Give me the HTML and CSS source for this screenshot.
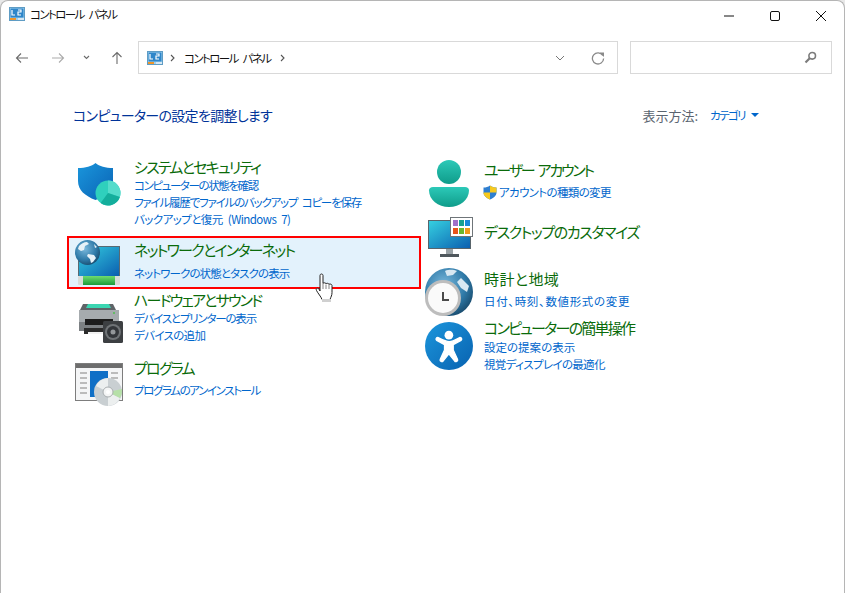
FILE: index.html
```html
<!DOCTYPE html>
<html lang="ja">
<head>
<meta charset="utf-8">
<title>コントロール パネル</title>
<link rel="stylesheet" href="styles.css">
</head>
<body>
<svg class="defs" width="0" height="0" aria-hidden="true">
  <defs>
    <symbol id="cp" viewBox="0 0 16 14">
      <rect x="0.5" y="0.5" width="15" height="13" fill="#9fd0ee" stroke="#5f9cc4"/>
      <rect x="1.5" y="1.5" width="13" height="9" fill="#2f86c9"/>
      <path d="M3 3v5h3M9 3h3v2h-3v3h3" fill="none" stroke="#fff" stroke-width="1.2"/>
      <rect x="1" y="11" width="6" height="2" fill="#f0962a"/>
      <rect x="9" y="11" width="6" height="2" fill="#d7e7f2"/>
    </symbol>
    <linearGradient id="gShield" x1="0" y1="0" x2="1" y2="1"><stop offset="0" stop-color="#1a96dc"/><stop offset="1" stop-color="#0a62b4"/></linearGradient>
    <linearGradient id="gTeal" x1="0" y1="0" x2="0" y2="1"><stop offset="0" stop-color="#2cc9b8"/><stop offset="1" stop-color="#0f9c8a"/></linearGradient>
    <linearGradient id="gScreen" x1="0" y1="0" x2="1" y2="1"><stop offset="0" stop-color="#35cfe0"/><stop offset="1" stop-color="#0b5fb0"/></linearGradient>
    <radialGradient id="gGlobe" cx="0.4" cy="0.35" r="0.75"><stop offset="0" stop-color="#7ab8dc"/><stop offset="0.6" stop-color="#2f7aa8"/><stop offset="1" stop-color="#14405f"/></radialGradient>
    <linearGradient id="gAcc" x1="0" y1="0" x2="1" y2="1"><stop offset="0" stop-color="#1c96dc"/><stop offset="1" stop-color="#0862b0"/></linearGradient>
    <linearGradient id="gPipe" x1="0" y1="0" x2="0" y2="1"><stop offset="0" stop-color="#6fdc6f"/><stop offset="1" stop-color="#1a9a3a"/></linearGradient>
  </defs>
</svg>
<div class="window">
  <header class="titlebar">
    <div class="title-group">
      <svg class="cp-icon" width="16" height="14"><use href="#cp"/></svg>
      <span class="title-text">コントロール パネル</span>
    </div>
    <div class="controls">
      <svg class="ctl" width="46" height="30" viewBox="0 0 46 30"><path d="M18 15h10" stroke="#111" stroke-width="1"/></svg>
      <svg class="ctl" width="46" height="30" viewBox="0 0 46 30"><rect x="18.500" y="10.500" width="9" height="9" rx="1.500" fill="none" stroke="#111"/></svg>
      <svg class="ctl" width="46" height="30" viewBox="0 0 46 30"><path d="M18 10l10 10M28 10l-10 10" stroke="#111" stroke-width="1"/></svg>
    </div>
  </header>
  <nav class="navbar">
    <div class="navbtns">
      <svg class="nav-ic" width="14" height="12" viewBox="0 0 14 12"><path d="M13 6H1.500M6 1.500L1.500 6 6 10.500" fill="none" stroke="#6b6b6b" stroke-width="1.100"/></svg>
      <svg class="nav-ic fwd" width="14" height="12" viewBox="0 0 14 12"><path d="M1 6h11.500M8 1.500L12.500 6 8 10.500" fill="none" stroke="#ababab" stroke-width="1.100"/></svg>
      <svg class="nav-ic down" width="7" height="5" viewBox="0 0 7 5"><path d="M1 1l2.500 2.500L6 1" fill="none" stroke="#6b6b6b" stroke-width="1.100"/></svg>
      <svg class="nav-ic up" width="12" height="14" viewBox="0 0 12 14"><path d="M6 13V1.500M1.500 6L6 1.500 10.500 6" fill="none" stroke="#6b6b6b" stroke-width="1.100"/></svg>
    </div>
    <div class="address">
      <svg class="cp-icon" width="16" height="14"><use href="#cp"/></svg>
      <svg class="crumb-sep" width="5" height="8" viewBox="0 0 5 8"><path d="M1 1l3 3-3 3" fill="none" stroke="#555" stroke-width="1.100"/></svg>
      <span class="crumb">コントロール パネル</span>
      <svg class="crumb-sep" width="5" height="8" viewBox="0 0 5 8"><path d="M1 1l3 3-3 3" fill="none" stroke="#555" stroke-width="1.100"/></svg>
      <span class="spacer"></span>
      <svg class="addr-down" width="10" height="6" viewBox="0 0 10 6"><path d="M1 1l4 4 4-4" fill="none" stroke="#777" stroke-width="1"/></svg>
      <svg class="refresh" width="14" height="14" viewBox="0 0 14 14"><path d="M11.800 4.500A5.600 5.600 0 1 0 12.600 7.500" fill="none" stroke="#8a8a8a" stroke-width="1.300"/><path d="M8.500 1.500h4.500v4.500z" fill="#8a8a8a"/></svg>
    </div>
    <div class="search">
      <svg width="13" height="13" viewBox="0 0 13 13"><circle cx="8.200" cy="4.800" r="3.300" fill="none" stroke="#7c7c7c" stroke-width="1.600"/><path d="M5.700 7.300L1.500 11.500" stroke="#7c7c7c" stroke-width="2.200"/></svg>
    </div>
  </nav>
  <main class="content">
    <div class="heading-row">
      <h1 class="heading">コンピューターの設定を調整します</h1>
      <div class="view">
        <span class="view-label">表示方法:</span>
        <span class="view-value">カテゴリ</span>
        <span class="view-caret"></span>
      </div>
    </div>
    <div class="columns">
      <div class="col col-left">
        <section class="item item-system">
          <svg class="icon" width="48" height="48" viewBox="0 0 48 48">
            <path d="M20.500 3c-4 3.500-10 5-17.500 5v13c0 9 7 15 17.500 19 10.500-4 17.500-10 17.500-19V8c-7.500 0-13.500-1.500-17.500-5z" fill="url(#gShield)"/>
            <circle cx="33" cy="33" r="12.500" fill="#2fd0bd"/>
            <path d="M33 33V20.500a12.500 12.500 0 0 1 11.900 16.400z" fill="#55dccb"/>
            <path d="M33 33l11.900 3.900A12.500 12.500 0 0 1 25.600 43.100z" fill="#14ae9c"/>
          </svg>
          <div class="text">
            <a class="cat">システムとセキュリティ</a>
            <a class="sub ls-n">コンピューターの状態を確認</a>
            <a class="sub">ファイル履歴でファイルのバックアップ コピーを保存</a>
            <a class="sub ls-w">バックアップと復元 (Windows 7)</a>
          </div>
        </section>
        <section class="item item-network">
          <svg class="icon" width="48" height="48" viewBox="0 0 48 48">
            <rect x="3" y="6" width="42" height="30" fill="#5a6a72"/>
            <rect x="4" y="7" width="40" height="29" fill="url(#gScreen)"/>
            <rect x="3" y="36" width="42" height="9" rx="1" fill="#d8dcd8"/>
            <rect x="8" y="36" width="32" height="9" fill="url(#gPipe)"/>
            <circle cx="12.500" cy="12.500" r="12.500" fill="url(#gGlobe)"/>
            <path d="M4 6c2-2 5-4 8-4l2 2-4 2-1 4-3 1-3-2zM13 14l6 1 2 3-3 4-2 1-1-4-3-3zM19 4l3 3-2 1z" fill="#e8f2f8"/>
          </svg>
          <div class="text gapped-net">
            <a class="cat">ネットワークとインターネット</a>
            <a class="sub ls-m">ネットワークの状態とタスクの表示</a>
          </div>
          <svg class="cursor" width="20" height="30" viewBox="0 0 20 30">
            <path d="M5 2.500c0-2 3-2 3 0v8c0-1 3-1 3 .5 0-1 3-1 3 .5 0-1 3-.5 3 1v7c0 3-1 4-2 7H7c-1-3-4-6-5.500-9-1-2 1-3 2.500-1.500L5 18z" fill="#fff" stroke="#222" stroke-width="1"/>
            <path d="M8 11v5M11 11.500v4.500M14 12v4" stroke="#666" stroke-width="0.800"/>
            <rect x="7" y="26" width="9" height="3" fill="#d0d0d0"/>
          </svg>
        </section>
        <section class="item item-hardware">
          <svg class="icon" width="48" height="48" viewBox="0 0 48 48">
            <path d="M8 5h30l3 6H5z" fill="#5f6468"/>
            <path d="M13 5h21l2 4H11z" fill="#3bd6b2"/>
            <rect x="4" y="11" width="40" height="18" fill="#a6abae"/>
            <rect x="4" y="23" width="40" height="9" fill="#7c8083"/>
            <rect x="10" y="20" width="28" height="6" fill="#1d1d1d"/>
            <rect x="9" y="29" width="24" height="6" fill="#2c2c2c"/>
            <rect x="13" y="33" width="16" height="2" fill="#f1f1f1"/>
            <circle cx="39" cy="14" r="1" fill="#4ec04e"/>
            <rect x="28" y="22" width="20" height="22" rx="1.500" fill="#3c3f42"/>
            <circle cx="38" cy="33" r="8" fill="#6f7376"/>
            <circle cx="38" cy="33" r="6" fill="#33363a"/>
            <circle cx="38" cy="33" r="2.500" fill="#93979a"/>
          </svg>
          <div class="text">
            <a class="cat">ハードウェアとサウンド</a>
            <a class="sub">デバイスとプリンターの表示</a>
            <a class="sub ls-l">デバイスの追加</a>
          </div>
        </section>
        <section class="item item-program">
          <svg class="icon" width="48" height="48" viewBox="0 0 48 48">
            <rect x="0.500" y="2.500" width="47" height="37" fill="#f4f5f6" stroke="#7d7d7d"/>
            <rect x="1" y="3" width="46" height="4" fill="#6d6d6d"/>
            <path d="M5 12h7M5 17h7M5 22h7M5 27h7M5 32h7M36 12h7M36 17h7" stroke="#a8a8a8" stroke-width="1.500"/>
            <rect x="15" y="10" width="18" height="26" fill="#0f6fc6"/>
            <circle cx="33" cy="31" r="14" fill="#c9cfd2"/>
            <path d="M33 31L21 25a14 14 0 0 1 12-8zM33 31l12 6a14 14 0 0 1-12 8z" fill="#ecefef"/>
            <path d="M33 31l14-3a14 14 0 0 1-2 9z" fill="#b6e0a8"/>
            <circle cx="33" cy="31" r="5" fill="#f4f5f5" stroke="#a9aeb0"/>
            <circle cx="33" cy="31" r="2" fill="#fff"/>
          </svg>
          <div class="text gapped">
            <a class="cat">プログラム</a>
            <a class="sub ls-n">プログラムのアンインストール</a>
          </div>
        </section>
      </div>
      <div class="col col-right">
        <section class="item item-user">
          <svg class="icon" width="48" height="48" viewBox="0 0 48 48">
            <circle cx="24" cy="12" r="12" fill="url(#gTeal)"/>
            <path d="M8 27h32c2.500 0 4 1.500 4 3.500 0 9-9 16.500-20 16.500S4 39.500 4 30.500c0-2 1.500-3.500 4-3.500z" fill="url(#gTeal)"/>
          </svg>
          <div class="text gapped">
            <a class="cat ls-user">ユーザー アカウント</a>
            <div class="sub-row">
              <svg class="uac" width="14" height="15" viewBox="0 0 14 15">
                <path d="M7 0.500c2 1.500 4 2 6.500 2v5c0 3.500-3 5.500-6.500 7-3.500-1.500-6.500-3.500-6.500-7v-5C3 2.500 5 2 7 .5z" fill="#2f7fd0"/>
                <path d="M7 .5c2 1.500 4 2 6.500 2v5H7zM7 7.500H.5c0 3.500 3 5.500 6.500 7z" fill="#f7c91e"/>
              </svg>
              <a class="sub ls-l">アカウントの種類の変更</a>
            </div>
          </div>
        </section>
        <section class="item item-desktop">
          <svg class="icon" width="48" height="48" viewBox="0 0 48 48">
            <rect x="3" y="3" width="43" height="29" fill="#59646b"/>
            <rect x="4" y="4" width="41" height="27" fill="url(#gScreen)"/>
            <rect x="21" y="32" width="7" height="5" fill="#9aa2a6"/>
            <rect x="15" y="37" width="19" height="3" fill="#4f575c"/>
            <rect x="25.500" y="0.500" width="22" height="19" fill="#fff" stroke="#6f7579"/>
            <rect x="28" y="3" width="5" height="6" fill="#a070c8"/>
            <rect x="34" y="3" width="5" height="6" fill="#18a090"/>
            <rect x="40" y="3" width="5" height="6" fill="#1a88d8"/>
            <rect x="28" y="11" width="5" height="6" fill="#e8541a"/>
            <rect x="34" y="11" width="5" height="6" fill="#6ab82e"/>
            <rect x="40" y="11" width="5" height="6" fill="#f09a1c"/>
          </svg>
          <div class="text">
            <a class="cat ls-wide">デスクトップのカスタマイズ</a>
          </div>
        </section>
        <section class="item item-clock">
          <svg class="icon" width="48" height="48" viewBox="0 0 48 48">
            <circle cx="24" cy="24" r="24" fill="url(#gGlobe)"/>
            <path d="M20 3c5-2 9-1 12 0l-4 4-6 1zM36 10l8 8-2 6-6-4-4-6z" fill="#d8e8f2"/>
            <circle cx="18" cy="30" r="18" fill="#bdbdbd"/>
            <circle cx="18" cy="30" r="15" fill="#fafafa"/>
            <path d="M18 24v8h6" fill="none" stroke="#4a4a4a" stroke-width="2"/>
          </svg>
          <div class="text gapped">
            <a class="cat ls-k">時計と地域</a>
            <a class="sub ls-k">日付、時刻、数値形式の変更</a>
          </div>
        </section>
        <section class="item item-access">
          <svg class="icon" width="48" height="48" viewBox="0 0 48 48">
            <circle cx="24" cy="24" r="24" fill="url(#gAcc)"/>
            <g transform="translate(3 4) scale(.87)">
              <circle cx="24" cy="10.500" r="5" fill="#fff"/>
              <path d="M11 13c-1.500 0-2.500 2.500-1 3.500l9 5v6l-5 11c-.7 2 2.300 3.500 3.500 1.500L24 32l6.500 8c1.200 2 4.200.5 3.500-1.500l-5-11v-6l9-5c1.500-1 .5-3.500-1-3.500-4 2-8 5-12.500 5S15 15 11 13z" fill="#fff" stroke="#fff" stroke-width="1.500"/>
            </g>
          </svg>
          <div class="text tight">
            <a class="cat">コンピューターの簡単操作</a>
            <a class="sub ls-z">設定の提案の表示</a>
            <a class="sub ls-l">視覚ディスプレイの最適化</a>
          </div>
        </section>
      </div>
    </div>
  </main>
</div>
</body>
</html>
```
FILE: styles.css
```css
* { box-sizing: border-box; }
html, body { margin: 0; padding: 0; background: #fff; }
body {
  width: 845px;
  height: 593px;
  overflow: hidden;
  font-family: "Noto Sans CJK JP", "Noto Sans", sans-serif;
  font-feature-settings: "palt";
  background: #e8e8e8;
}
.defs { position: absolute; }
.window {
  width: 845px;
  height: 593px;
  background: #fff;
  border: 1px solid #b5b5b5;
  border-bottom: 0;
  border-radius: 8px 8px 0 0;
  overflow: hidden;
  display: flex;
  flex-direction: column;
}
.titlebar {
  height: 30px;
  display: flex;
  align-items: flex-start;
}
.title-group {
  height: 26px;
  display: flex;
  align-items: center;
  padding-left: 8px;
}
.title-text {
  margin-left: 5px;
  font-size: 11.500px;
  letter-spacing: -1.600px;
  word-spacing: 4px;
  color: #111;
}
.controls { margin-left: auto; display: flex; }
.ctl { display: block; }
.cp-icon { flex: none; }
.navbar {
  height: 33px;
  margin-top: 10px;
  display: flex;
  align-items: center;
}
.navbtns { width: 137px; display: flex; align-items: center; height: 33px; padding-left: 14px; }
.nav-ic { flex: none; }
.fwd { margin-left: 22px; }
.down { margin-left: 18px; }
.up { margin-left: 21px; }
.address {
  width: 480px;
  height: 33px;
  border: 1px solid #d9d9d9;
  display: flex;
  align-items: center;
  padding-left: 8px;
}
.crumb-sep { margin-left: 7px; }
.crumb {
  margin-left: 9px;
  font-size: 11.500px;
  letter-spacing: -1.600px;
  word-spacing: 4px;
  color: #111;
}
.crumb + .crumb-sep { margin-left: 9px; }
.spacer { flex: 1; }
.addr-down { margin-right: 26px; }
.refresh { margin-right: 12px; }
.search {
  width: 202px;
  height: 33px;
  margin-left: 12px;
  border: 1px solid #d9d9d9;
  display: flex;
  align-items: center;
  justify-content: flex-end;
  padding-right: 14px;
}
.content { flex: 1; padding-top: 29px; }
.heading-row {
  display: flex;
  align-items: center;
  height: 24px;
  padding-left: 72px;
}
.heading {
  margin: 0;
  font-size: 14px;
  font-weight: 400;
  color: #003399;
  letter-spacing: -0.7px;
}
.view { margin-left: auto; margin-right: 85px; display: flex; align-items: center; }
.view-label { font-size: 13px; color: #5a6470; }
.view-value { margin-left: 12px; font-size: 11.500px; letter-spacing: -1.600px; color: #0066cc; }
.view-caret {
  margin-left: 6px;
  width: 0;
  height: 0;
  border-left: 4px solid transparent;
  border-right: 4px solid transparent;
  border-top: 4px solid #0066cc;
}
.columns { display: flex; margin-top: 30px; margin-left: 66px; }
.col { display: flex; flex-direction: column; }
.col-left { width: 354px; }
.col-right { margin-left: 4px; }
.item { display: flex; align-items: flex-start; }
.icon { flex: none; display: block; }
.text { margin-left: 11px; display: flex; flex-direction: column; }
.gapped .cat { margin-bottom: 4px; }
.gapped-net .cat { margin-bottom: 5px; }
.tight .cat { margin-bottom: 1px; }
.cat {
  font-size: 15px;
  line-height: 20px;
  height: 20px;
  letter-spacing: -1.750px;
  color: #0a6b0a;
  white-space: nowrap;
}
.sub {
  font-size: 11.500px;
  line-height: 17px;
  height: 17px;
  letter-spacing: -1.200px;
  word-spacing: 3px;
  color: #0066cc;
  white-space: nowrap;
}
.cat.ls-wide { letter-spacing: -1.400px; }
.cat.ls-k { letter-spacing: 0.400px; }
.cat.ls-user { letter-spacing: -2.200px; word-spacing: 3px; }
.sub.ls-n { letter-spacing: -1.400px; }
.sub.ls-m { letter-spacing: -0.900px; }
.sub.ls-l { letter-spacing: -0.650px; }
.sub.ls-w { letter-spacing: -0.550px; }
.sub.ls-z { letter-spacing: 0; }
.sub.ls-k { letter-spacing: 0.650px; }
.sub-row { display: flex; align-items: center; margin-left: -1px; }
.uac { flex: none; margin-right: 2px; }

.item-system { height: 79px; padding: 0 0 0 8px; }
.item-system .icon { margin-top: 3px; }
.item-network {
  height: 53px;
  padding: 2px 0 0 6px;
  border: 2px solid #f00;
  background: #e3f2fc;
  position: relative;
}
.cursor { position: absolute; left: 246px; top: 35px; }
.item-hardware { height: 63px; padding: 1px 0 0 8px; }
.item-hardware .icon { margin-top: 9px; margin-bottom: -9px; }
.item-program { padding: 6px 0 0 8px; }
.item-program .icon { margin-top: 3px; }
.item-user { height: 61px; padding-top: 3px; }
.item-desktop { height: 45px; padding-top: 4px; }
.item-desktop .icon { margin-top: -5px; }
.item-clock { height: 55px; padding-top: 6px; }
.item-clock .icon { margin-top: -1px; }
.item-access .icon { margin-top: 4px; }
```
